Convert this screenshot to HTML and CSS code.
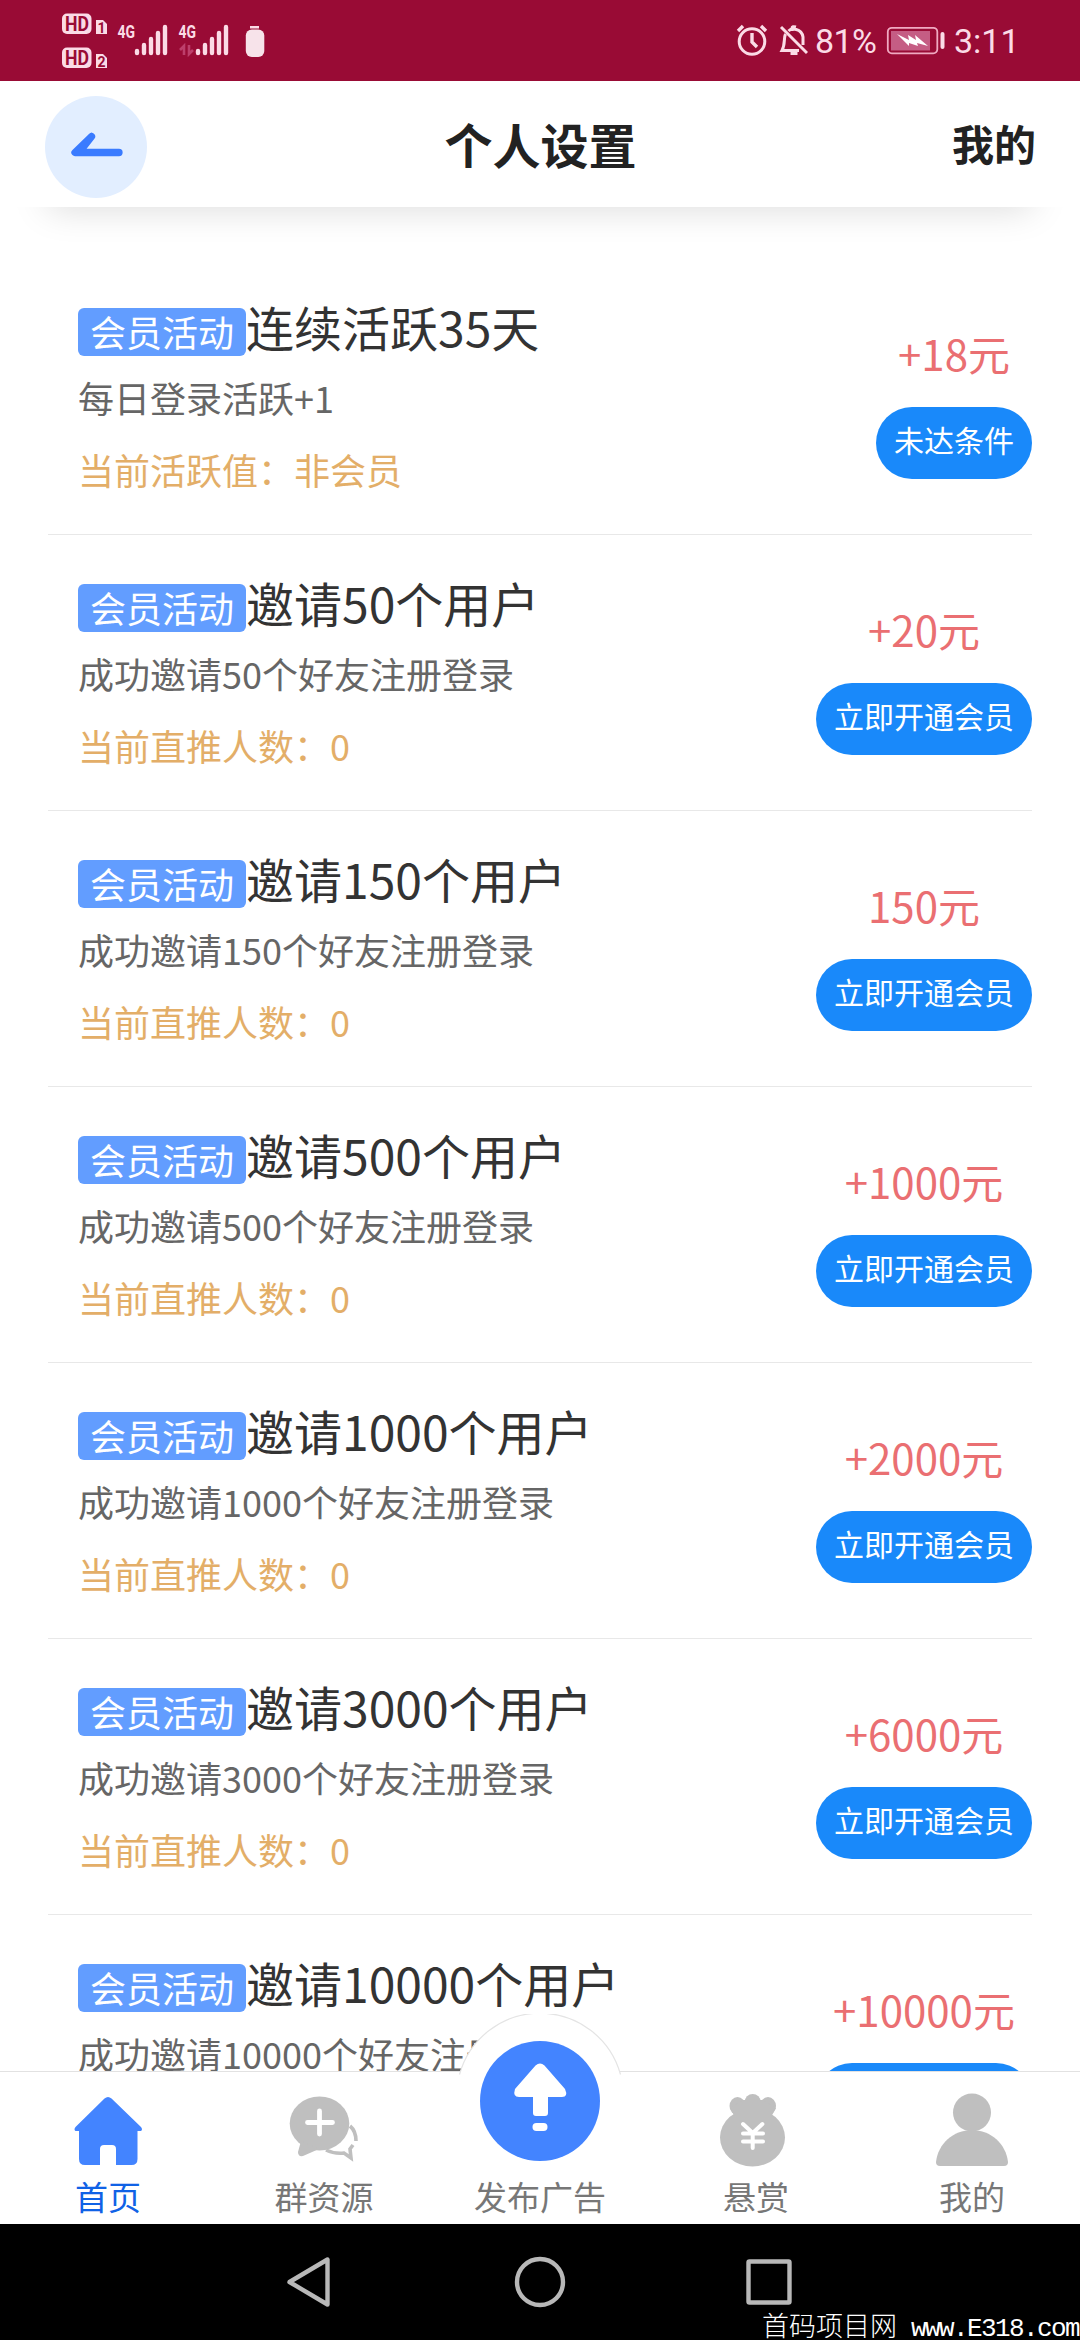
FILE: index.html
```html
<!DOCTYPE html>
<html lang="zh-CN">
<head>
<meta charset="utf-8">
<title>个人设置</title>
<link rel="stylesheet" href="styles.css">
</head>
<body>
<div class="screen">
  <div class="status">
    <svg class="status-left" width="210" height="81" viewBox="60 0 210 81">
      <g fill="#fbdbe6">
        <rect x="62" y="13.500" width="29.500" height="20.500" rx="5"/>
        <path d="M96 20h7l4 4v10H96z"/>
        <rect x="62" y="47.500" width="29.500" height="20.500" rx="5"/>
        <path d="M96 54h7l4 4v10H96z"/>
      </g>
      <g class="hd"><text x="65" y="30.500" textLength="24" lengthAdjust="spacingAndGlyphs">HD</text><text x="65" y="64.500" textLength="24" lengthAdjust="spacingAndGlyphs">HD</text></g>
      <g class="sim"><text x="97.500" y="32.500">1</text><text x="97.500" y="66.500">2</text></g>
      <g class="net"><text x="117.500" y="38" textLength="17.500" lengthAdjust="spacingAndGlyphs">4G</text><text x="178.500" y="38" textLength="17.500" lengthAdjust="spacingAndGlyphs">4G</text></g>
      <g stroke="#fbdbe6" stroke-width="4.400" stroke-linecap="round">
        <path d="M137 51v2M144 45v8M151 39v14M158 33v20M165 27v26M198 51v2M205 45v8M212 39v14M219 33v20M226 27v26"/>
      </g>
      <path d="M180 50l4-4v9M189 45v9l4-4" fill="none" stroke="#bd3f6b" stroke-width="2.600"/>
      <rect x="250" y="26" width="9" height="2.500" fill="#fbdbe6"/>
      <rect x="245.800" y="29.500" width="18.500" height="27.500" rx="6" fill="#f7e3ea"/>
    </svg>
    <div class="status-right">
      <svg width="72" height="81" viewBox="735 0 72 81" fill="none" stroke="#fbdbe6" stroke-width="3">
        <circle cx="751" cy="41.500" r="12.800"/>
        <path d="M737 31l5-5M765 31l-5-5M751 33v9l5 5" stroke-width="3.400"/>
        <path d="M784.500 34c-2 4 0 10-3.500 16.500h17M787.500 31c3-3 13-3 14.500 6v8M791 31v-3q0-2 4-1" />
        <path d="M780 27l26 26" stroke-width="3"/>
        <path d="M789.500 53.500h7" stroke-width="3"/>
      </svg>
      <span class="pct">81%</span>
      <svg class="batt" width="60" height="81" viewBox="885 0 60 81">
        <rect x="886.800" y="27.800" width="49.500" height="25.500" rx="4" fill="none" stroke="#f0a9c1" stroke-width="1.800"/>
        <rect x="890" y="31" width="39" height="19.500" fill="#c55d84"/>
        <path d="M896 34l12 6-1-5 8 5-1-5 13 11-11-3 1 3-9-3v3z" fill="#fff"/>
        <rect x="939.500" y="32" width="4" height="17" rx="2" fill="#fbdbe6"/>
      </svg>
      <span class="clock">3:11</span>
    </div>
  </div>
  <header class="header">
    <a class="back"><svg width="102" height="102" viewBox="0 0 102 102" fill="none" stroke="#3a7bff" stroke-width="7.300" stroke-linecap="round" stroke-linejoin="round"><path d="M46.500 40.500L30 56.500h44M46.500 40.500L36 54"/></svg></a>
    <h1 class="title">个人设置</h1>
    <a class="mine">我的</a>
  </header>
  <main class="list">
    <section class="row"><div class="info"><h2><span class="badge">会员活动</span>连续活跃35天</h2><p class="desc">每日登录活跃+1</p><p class="state">当前活跃值：非会员</p></div><div class="action"><b>+18元</b><button>未达条件</button></div></section>
    <section class="row"><div class="info"><h2><span class="badge">会员活动</span>邀请50个用户</h2><p class="desc">成功邀请50个好友注册登录</p><p class="state">当前直推人数：0</p></div><div class="action"><b>+20元</b><button>立即开通会员</button></div></section>
    <section class="row"><div class="info"><h2><span class="badge">会员活动</span>邀请150个用户</h2><p class="desc">成功邀请150个好友注册登录</p><p class="state">当前直推人数：0</p></div><div class="action"><b>150元</b><button>立即开通会员</button></div></section>
    <section class="row"><div class="info"><h2><span class="badge">会员活动</span>邀请500个用户</h2><p class="desc">成功邀请500个好友注册登录</p><p class="state">当前直推人数：0</p></div><div class="action"><b>+1000元</b><button>立即开通会员</button></div></section>
    <section class="row"><div class="info"><h2><span class="badge">会员活动</span>邀请1000个用户</h2><p class="desc">成功邀请1000个好友注册登录</p><p class="state">当前直推人数：0</p></div><div class="action"><b>+2000元</b><button>立即开通会员</button></div></section>
    <section class="row"><div class="info"><h2><span class="badge">会员活动</span>邀请3000个用户</h2><p class="desc">成功邀请3000个好友注册登录</p><p class="state">当前直推人数：0</p></div><div class="action"><b>+6000元</b><button>立即开通会员</button></div></section>
    <section class="row"><div class="info"><h2><span class="badge">会员活动</span>邀请10000个用户</h2><p class="desc">成功邀请10000个好友注册登录</p></div><div class="action"><b>+10000元</b><button></button></div></section>
  </main>
  <nav class="tabs">
    <svg class="bump" width="168" height="62" viewBox="0 0 168 62"><path d="M3.500 60.500A83.500 83.500 0 0 1 164.500 60.500V62H3.500z" fill="#fff"/><path d="M3.500 60.500A83.500 83.500 0 0 1 164.500 60.500" fill="none" stroke="#e4e4e4" stroke-width="1.200"/></svg>
    <a class="tab on">
      <svg width="72" height="72" viewBox="72 2095 72 72" fill="#4384ff"><path d="M104.500 2098.500q3.500-3 7 0L141 2127q2 2.500 0 4h-3.500v28q0 6-6 6h-15.500v-16q0-4-4-4h-8q-4 0-4 4v16H85q-6 0-6-6v-28h-3.500q-2-1.500 0-4z"/></svg>
      <span>首页</span></a>
    <a class="tab">
      <svg width="72" height="72" viewBox="288 2095 72 72"><ellipse cx="319.500" cy="2123.500" rx="29.800" ry="27" fill="#bfbfbf"/><path d="M301 2141l-3 11q0 5 5 4l16-7z" fill="#bfbfbf"/><path d="M319.500 2111v23M307.500 2122.500h25" stroke="#fff" stroke-width="4.800" stroke-linecap="round"/><path d="M350 2126q6 5 6 15M326 2150q8 4 18 3l7 5-1-9 3-4" fill="none" stroke="#bfbfbf" stroke-width="3.600"/></svg>
      <span>群资源</span></a>
    <a class="tab">
      <svg class="publish" width="120" height="120" viewBox="480 2041 120 120"><circle cx="540" cy="2101" r="60" fill="#4384ff"/><path d="M535.500 2065.500q4.500-4 9 0l20.500 23.500q3.500 8-3 8h-14v16q0 3-3 3h-9q-3 0-3-3v-16h-14q-6.500 0-4-8z" fill="#fff"/><rect x="532.500" y="2123" width="15" height="8" rx="4" fill="#fff"/></svg>
      <span>发布广告</span></a>
    <a class="tab">
      <svg width="72" height="74" viewBox="720 2094 72 74"><g fill="#bfbfbf"><ellipse cx="752.500" cy="2138.500" rx="32.500" ry="29"/><ellipse cx="737.500" cy="2107" rx="8" ry="9"/><ellipse cx="768" cy="2107" rx="8" ry="9"/><circle cx="752.700" cy="2103" r="8"/><path d="M730 2109l5 9h36l5-9-13-8h-20z"/></g><path d="M743 2125l9.700 9 9.700-9M743 2134.500h20M743 2142.500h20M752.700 2134v15" fill="none" stroke="#fff" stroke-width="4" stroke-linecap="round"/></svg>
      <span>悬赏</span></a>
    <a class="tab">
      <svg width="72" height="74" viewBox="936 2094 72 74" fill="#bfbfbf"><circle cx="972" cy="2113.500" r="19"/><path d="M936 2163c2-18 17-32 36-32s34 14 36 32q0 4-4 4h-64q-4 0-4-4z"/></svg>
      <span>我的</span></a>
  </nav>
  <footer class="sysnav">
    <svg width="506" height="116" viewBox="287 2224 506 116" fill="none" stroke="#b8b8b8" stroke-width="4.400" stroke-linejoin="round"><path d="M327.500 2259.500v45L289.500 2282z"/><circle cx="540" cy="2282" r="23"/><rect x="748.500" y="2261.500" width="41" height="41" rx="1"/></svg>
    <span class="mark">首码项目网<i>www.E318.com</i></span>
  </footer>
</div>
</body>
</html>
```
FILE: styles.css
```css
* { box-sizing: border-box; margin: 0; padding: 0; }
body { width: 1080px; height: 2340px; overflow: hidden; background: #fff; font-family: "Noto Sans CJK SC", sans-serif; }
.screen { width: 1080px; height: 2340px; display: flex; flex-direction: column; }
.status { height: 81px; flex: none; background: #990b35; display: flex; justify-content: space-between; padding: 0 60px 0 60px; }
.status svg { display: block; flex: none; }
.status text { font-family: Roboto, sans-serif; font-weight: 700; }
.hd text { font-size: 20px; fill: #990b35; }
.sim text { font-size: 14px; fill: #990b35; }
.net text { font-size: 19px; fill: #fbdbe6; }
.status-right { display: flex; color: #fbdbe6; font: 34px/82px Roboto, sans-serif; }
.pct { width: 64px; margin: 0 7px 0 7px; white-space: nowrap; letter-spacing: -.6px; }
.clock { width: 66px; margin-left: 8px; white-space: nowrap; }
.header { height: 126px; flex: none; display: grid; grid-template-columns: 1fr auto 1fr; align-items: start; padding: 15px 44px 0 45px; background: #fff; position: relative; z-index: 1; box-shadow: 0 48px 36px -48px rgba(0,0,0,.17); }
.back { width: 102px; height: 102px; border-radius: 50%; background: #e2eeff; }
.back svg { display: block; }
.title { font-size: 48px; line-height: 72px; margin-top: 11px; font-weight: 700; color: #222; }
.mine { justify-self: end; font-size: 42px; line-height: 63px; margin-top: 15px; font-weight: 700; color: #222; }
.list { flex: 1; min-height: 0; overflow: hidden; padding: 52px 48px 0; }
.row { height: 276px; display: flex; justify-content: space-between; padding: 34px 0 0 30px; border-bottom: 1px solid #e8e8e8; }
.info h2 { display: flex; align-items: flex-start; height: 72px; font-size: 48px; line-height: 66px; font-weight: 400; color: #333; white-space: nowrap; }
.badge { height: 48px; width: 168px; margin-top: 15px; border-radius: 6px; background: #629dff; color: #fff; font-size: 36px; line-height: 47px; text-align: center; }
.desc, .state { font-size: 36px; line-height: 72px; white-space: nowrap; }
.desc { color: #666; margin-top: -4px; }
.state { color: #e3ae68; }
.action { display: flex; flex-direction: column; align-items: center; padding-top: 29px; }
.action b { font-size: 42px; line-height: 62px; font-weight: 400; color: #ea6f72; }
.action button { min-width: 156px; height: 72px; margin-top: 23px; padding: 0 18px 7px; border: 0; border-radius: 36px; background: #1989fa; color: #fff; font: 30px/45px "Noto Sans CJK SC", sans-serif; }
.row:last-child button { width: 216px; }
.tabs { height: 153px; flex: none; display: grid; grid-template-columns: repeat(5, 1fr); grid-template-rows: 152px; border-top: 1px solid #e2e2e2; background: #fff; position: relative; }
.bump { position: absolute; left: 456px; top: -58px; }
.tab { display: flex; flex-direction: column; align-items: center; justify-content: flex-end; position: relative; color: #777; font-size: 33px; line-height: 48px; padding-bottom: 4px; }
.tab svg { display: block; flex: none; margin-bottom: 5px; }
.tab .publish { margin-bottom: 11px; }
.on { color: #1062e6; }
.sysnav { height: 116px; flex: none; background: #000; display: flex; justify-content: center; position: relative; }
.mark { position: absolute; right: 1px; bottom: -7px; color: #fff; font: 300 27px/36px "Noto Sans CJK SC", serif; white-space: nowrap; }
.mark i { margin-left: 14px; font: 26px/36px "Liberation Mono", monospace; letter-spacing: -1.6px; }
```
